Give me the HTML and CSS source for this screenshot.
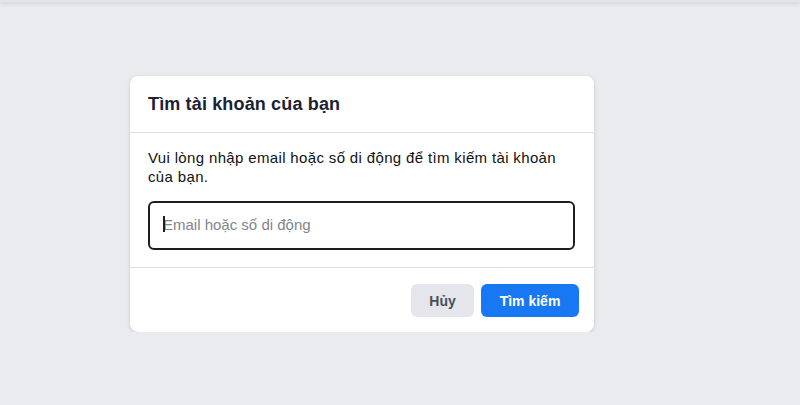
FILE: index.html
```html
<!DOCTYPE html>
<html lang="vi">
  <head>
    <meta charset="UTF-8" />
    <meta name="viewport" content="width=device-width, initial-scale=1.0" />
    <title>Tìm tài khoản của bạn</title>
    <link rel="stylesheet" href="styles.css">
  </head>
  <body>
    <div class="top_edge"></div>
    <div class="page_wrapper">
      <form class="recover_card" onsubmit="return false">
        <div class="recover_header">
          <h2 class="recover_title">Tìm tài khoản của bạn</h2>
        </div>
        <div class="recover_body">
          <p class="recover_text">
            Vui lòng nhập email hoặc số di động để tìm kiếm tài khoản của bạn.
          </p>
          <div class="recover_input-wrap">
            <span class="recover_caret"></span>
            <input
              class="recover_input"
              type="text"
              placeholder="Email hoặc số di động"
            />
          </div>
        </div>
        <div class="recover_footer">
          <a class="recover_btn recover_btn-cancel" href="#">Hủy</a>
          <button class="recover_btn recover_btn-search" type="submit">Tìm kiếm</button>
        </div>
      </form>
    </div>
  </body>
</html>
```

FILE: styles.css
```css
body {
  margin: 0;
  background-color: #e9ebee;
  color: #1c1e21;
  font-family: "Liberation Sans", Arial, sans-serif;
  font-size: 15px;
}

.top_edge {
  height: 2px;
  background-color: #e4e5e8;
  box-shadow: 0 1px 4px rgba(0, 0, 0, 0.18);
}

.page_wrapper {
  padding-top: 74px;
  padding-left: 130px;
}

.recover_card {
  width: 464px;
  background-color: #fff;
  border-radius: 8px;
  box-shadow: 0 1px 3px rgba(0, 0, 0, 0.12), 0 2px 6px rgba(0, 0, 0, 0.06);
}

.recover_header {
  height: 56px;
  display: flex;
  align-items: center;
  padding: 0 18px;
  border-bottom: 1px solid #dddfe2;
}

.recover_title {
  margin: 0;
  font-size: 18px;
  font-weight: 700;
  letter-spacing: 0.15px;
  color: #1c2233;
}

.recover_body {
  padding: 15px 18px 17px;
  border-bottom: 1px solid #dddfe2;
}

.recover_text {
  margin: 0 0 15px;
  line-height: 19px;
  letter-spacing: 0.35px;
  color: #111;
}

.recover_input-wrap {
  position: relative;
}

/* focused text cursor at start of the field */
.recover_caret {
  position: absolute;
  left: 15px;
  top: 15px;
  width: 2px;
  height: 16px;
  background-color: #1c1e21;
}

.recover_input {
  box-sizing: border-box;
  width: 427px;
  height: 49px;
  padding: 0 13px 2px;
  border: 2px solid #1c1e21;
  border-radius: 6px;
  font-family: inherit;
  font-size: 15px;
  color: #1c1e21;
  outline: none;
  display: block;
}

.recover_input::placeholder {
  color: #80858d;
}

.recover_footer {
  display: flex;
  justify-content: flex-end;
  gap: 7px;
  padding: 16px 15px 15px;
}

.recover_btn {
  box-sizing: border-box;
  height: 33px;
  border: none;
  border-radius: 6px;
  font-family: inherit;
  font-size: 14px;
  font-weight: 700;
  display: flex;
  align-items: center;
  justify-content: center;
  text-decoration: none;
}

.recover_btn-cancel {
  width: 63px;
  background-color: #e4e6eb;
  color: #4b4f56;
}

.recover_btn-search {
  width: 98px;
  background-color: #1877f2;
  color: #fff;
}
```
